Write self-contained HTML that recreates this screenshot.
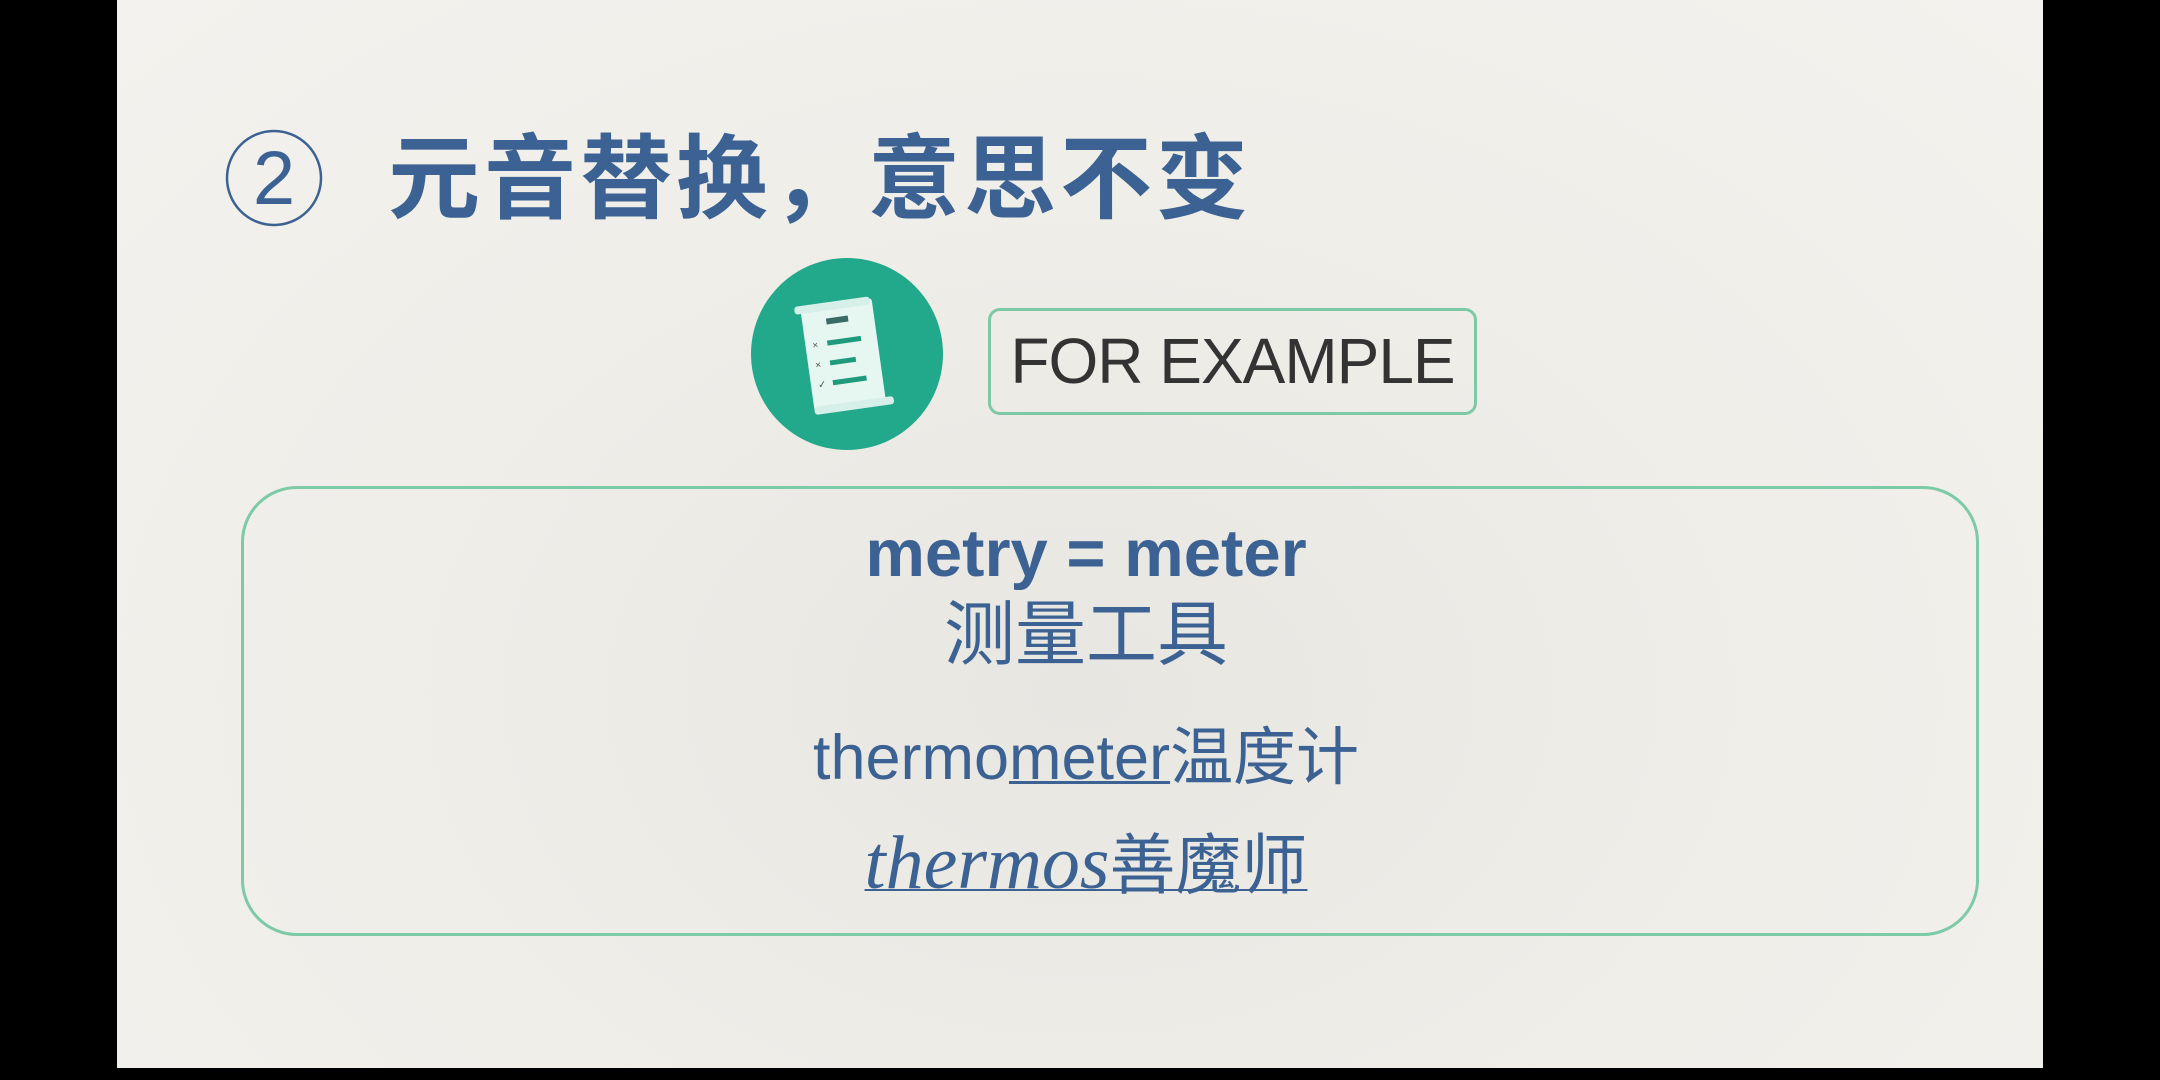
<!DOCTYPE html>
<html><head><meta charset="utf-8"><style>
html,body{margin:0;padding:0;width:2160px;height:1080px;background:#000;overflow:hidden}
.slide{position:absolute;left:117px;top:0;width:1926px;height:1068px;background:radial-gradient(ellipse at 50% 65%,#e8e6e1 0%,#efede8 45%,#f4f2ee 100%)}
.t{position:absolute;font-family:"Liberation Sans","Noto Sans CJK SC",sans-serif;white-space:nowrap}
.c{left:241px;width:1690px;text-align:center}
</style></head><body>
<div class="slide"></div>
<svg style="position:absolute;left:222px;top:126px" width="104" height="104" viewBox="0 0 104 104">
<circle cx="52" cy="52" r="47" fill="none" stroke="#3b6292" stroke-width="2.5"/>
<text x="52" y="78" text-anchor="middle" font-size="76" fill="#3b6292" font-family="Liberation Sans">2</text>
</svg>
<div class="t" style="left:388px;top:128px;font-size:92px;font-weight:bold;color:#3b6292;line-height:104px;letter-spacing:4px">元音替换，意思不变</div>

<svg style="position:absolute;left:751px;top:258px" width="192" height="192" viewBox="0 0 192 192">
<circle cx="96" cy="96" r="96" fill="#22a88a"/>
<g transform="rotate(-8 96 96)">
<rect x="56" y="44" width="72" height="104" rx="3" fill="#e6f6f1"/>
<rect x="50" y="42" width="76" height="8" rx="3" fill="#d6efe8"/>
<rect x="56" y="144" width="80" height="8" rx="3" fill="#d6efe8"/>
<rect x="80" y="58" width="22" height="6" fill="#3b6b66"/>
<rect x="78" y="80" width="34" height="5" fill="#1f9a7c"/>
<rect x="78" y="100" width="26" height="5" fill="#1f9a7c"/>
<rect x="78" y="120" width="34" height="5" fill="#1f9a7c"/>
<text x="63" y="86" font-size="10" fill="#555" font-family="Liberation Sans">×</text>
<text x="63" y="106" font-size="10" fill="#555" font-family="Liberation Sans">×</text>
<text x="63" y="126" font-size="10" fill="#555" font-family="Liberation Sans">✓</text>
</g></svg>

<div style="position:absolute;left:988px;top:308px;width:483px;height:101px;border:3px solid #7dc9a6;border-radius:12px"></div>
<div class="t" style="left:988px;top:308px;width:489px;height:107px;line-height:107px;text-align:center;font-size:64px;color:#333;letter-spacing:-1px">FOR EXAMPLE</div>

<div style="position:absolute;left:241px;top:486px;width:1732px;height:444px;border:3px solid #7dcaa6;border-radius:56px"></div>
<div class="t c" style="top:516px;font-size:67px;font-weight:bold;color:#3b6292;line-height:76px">metry = meter</div>
<div class="t c" style="top:598px;font-size:71px;color:#3b6292;line-height:76px">测量工具</div>
<div class="t c" style="top:722px;font-size:63px;color:#3b6292;line-height:72px">thermo<span style="text-decoration:underline;text-decoration-thickness:3px">meter</span>温度计</div>
<div class="t c" style="top:826px;font-size:66px;color:#3b6292;line-height:74px;text-decoration:underline;text-decoration-thickness:2px"><span style="font-family:'Liberation Serif',serif;font-style:italic;font-size:76px">thermos</span>善魔师</div>
</body></html>
